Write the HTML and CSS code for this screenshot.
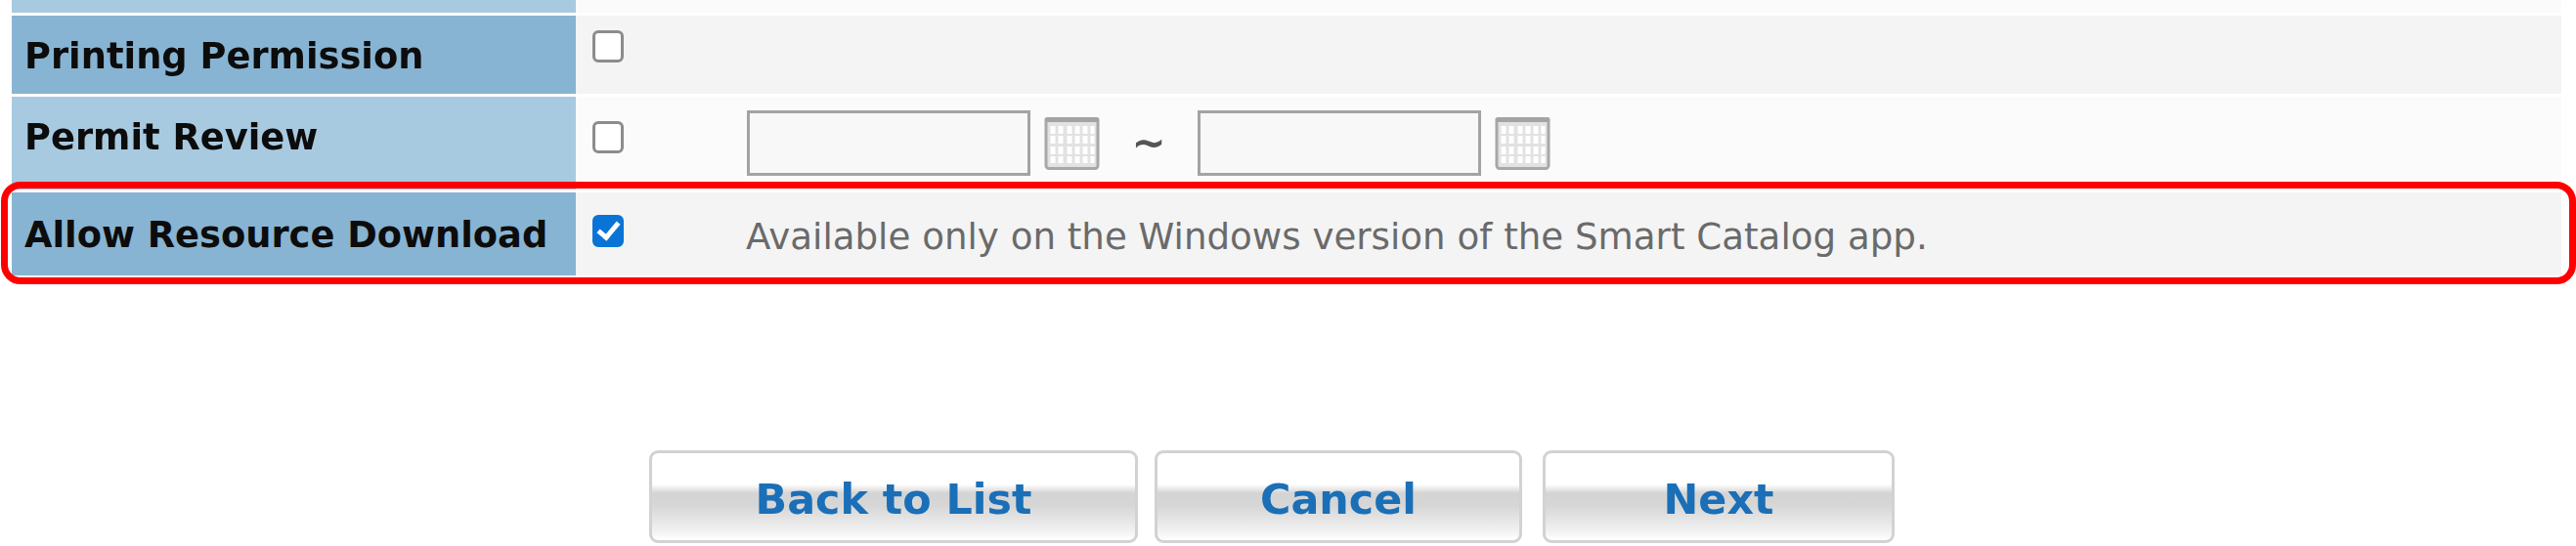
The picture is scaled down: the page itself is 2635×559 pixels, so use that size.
FILE: index.html
```html
<!DOCTYPE html>
<html lang="en">
<head>
  <meta charset="UTF-8">
  <title>Catalog Permissions</title>
  <link rel="stylesheet" href="styles.css">
</head>
<body>
  <svg class="defs" width="0" height="0">
    <symbol id="calendar" viewBox="0 0 56 54">
      <rect x="1.5" y="1.5" width="53" height="51" rx="3" fill="#e2e2e2" stroke="#a8a8a8" stroke-width="3"/>
      <rect x="0" y="0" width="56" height="5" rx="2.5" fill="#a4a4a4"/>
      <g fill="#fff">
        <rect x="6" y="9" width="5" height="8"/><rect x="14" y="9" width="5" height="8"/><rect x="23" y="9" width="5" height="8"/><rect x="31" y="9" width="5" height="8"/><rect x="39" y="9" width="5" height="8"/><rect x="47" y="9" width="4" height="8"/>
        <rect x="6" y="19" width="5" height="8"/><rect x="14" y="19" width="5" height="8"/><rect x="23" y="19" width="5" height="8"/><rect x="31" y="19" width="5" height="8"/><rect x="39" y="19" width="5" height="8"/><rect x="47" y="19" width="4" height="8"/>
        <rect x="6" y="30" width="5" height="8"/><rect x="14" y="30" width="5" height="8"/><rect x="23" y="30" width="5" height="8"/><rect x="31" y="30" width="5" height="8"/><rect x="39" y="30" width="5" height="8"/><rect x="47" y="30" width="4" height="8"/>
        <rect x="6" y="40" width="5" height="7"/><rect x="14" y="40" width="5" height="7"/><rect x="23" y="40" width="5" height="7"/><rect x="31" y="40" width="5" height="7"/><rect x="39" y="40" width="5" height="7"/><rect x="47" y="40" width="4" height="7"/>
      </g>
    </symbol>
  </svg>

  <div class="form-table">
    <div class="row row-cut">
      <div class="label light"></div>
      <div class="field odd"></div>
    </div>

    <div class="row row-print">
      <div class="label dark">Printing Permission</div>
      <div class="field even">
        <input type="checkbox" class="check">
      </div>
    </div>

    <div class="row row-review">
      <div class="label light">Permit Review</div>
      <div class="field odd">
        <input type="checkbox" class="check">
        <div class="dates">
          <input type="text" class="date-input">
          <svg class="cal-icon"><use href="#calendar"/></svg>
          <span class="tilde">~</span>
          <input type="text" class="date-input">
          <svg class="cal-icon"><use href="#calendar"/></svg>
        </div>
      </div>
    </div>

    <div class="row row-download">
      <div class="label dark">Allow Resource Download</div>
      <div class="field even">
        <input type="checkbox" class="check" checked>
        <span class="note">Available only on the Windows version of the Smart Catalog app.</span>
      </div>
    </div>
  </div>

  <div class="actions">
    <button class="btn btn-back">Back to List</button>
    <button class="btn btn-cancel">Cancel</button>
    <button class="btn btn-next">Next</button>
  </div>

  <div class="highlight"></div>
</body>
</html>
```

FILE: styles.css
```css
body {
  margin: 0;
  background: #fff;
  font-family: "DejaVu Sans", Verdana, sans-serif;
  position: relative;
  height: 559px;
  overflow: hidden;
}
.defs {
  position: absolute;
}
.form-table {
  margin: 0 15px 0 12px;
  display: flex;
  flex-direction: column;
  gap: 3px;
  filter: blur(0.6px);
}
.row {
  display: grid;
  grid-template-columns: 577px 1fr;
}
.row-cut { height: 13px; }
.row-print { height: 80px; }
.row-review { height: 95px; }
.row-download { height: 85px; }
.label {
  padding-left: 13px;
  font-size: 36.8px;
  font-weight: bold;
  color: #0c0c0c;
  line-height: 44px;
}
.dark { background: #88b4d3; }
.light { background: #a8cae1; }
.even { background: #f4f4f4; }
.odd { background: #fbfbfb; }
.row-print .label { padding-top: 20px; }
.row-review .label { padding-top: 20px; }
.row-download .label { padding-top: 22px; }
.field {
  display: flex;
  align-items: flex-start;
  padding-left: 17px;
}
.check {
  appearance: none;
  width: 32px;
  height: 33px;
  margin: 0;
  flex: none;
  background: #fff;
  border: 3px solid #8c8c8c;
  border-radius: 6px;
  position: relative;
}
.check:checked {
  background: #0a74d6;
  border-color: #0a74d6;
}
.check:checked::after {
  content: "";
  position: absolute;
  left: 7px;
  top: 0;
  width: 8px;
  height: 17px;
  border: solid #fff;
  border-width: 0 5px 5px 0;
  transform: rotate(40deg);
}
.row-print .check { margin-top: 15px; }
.row-review .check { margin-top: 25px; }
.row-download .check { margin-top: 23px; }
.dates {
  display: flex;
  align-items: center;
  margin: 14px 0 0 126px;
}
.date-input {
  width: 290px;
  height: 67px;
  box-sizing: border-box;
  border: 3px solid #a3a3a3;
  background: #f8f8f8;
  margin: 0;
  padding: 0;
}
.cal-icon {
  width: 57px;
  height: 54px;
  margin-left: 14px;
}
.tilde {
  width: 100px;
  text-align: center;
  font-size: 42px;
  font-weight: bold;
  color: #555;
}
.note {
  margin: 23px 0 0 125px;
  font-size: 37.2px;
  line-height: 44px;
  color: #6a6a6a;
}
.actions {
  display: flex;
  margin: 179px 0 0 664px;
  gap: 17px;
  filter: blur(0.6px);
}
.btn {
  height: 95px;
  padding: 5px 0 0;
  box-sizing: border-box;
  border: 3px solid #d2d2d2;
  border-radius: 9px;
  font-family: inherit;
  font-size: 42.8px;
  font-weight: bold;
  color: #1a6fb7;
  background: linear-gradient(#fff 0, #fff 36%, #d4d4d4 46%, #d6d6d6 60%, #f2f2f2 90%, #fff 100%);
}
.btn-back { width: 500px; }
.btn-cancel { width: 376px; }
.btn-next { width: 360px; margin-left: 4px; }
.highlight {
  position: absolute;
  left: 1px;
  top: 186px;
  right: 0;
  height: 105px;
  box-sizing: border-box;
  border: 7px solid #f00;
  border-radius: 20px;
}
```
